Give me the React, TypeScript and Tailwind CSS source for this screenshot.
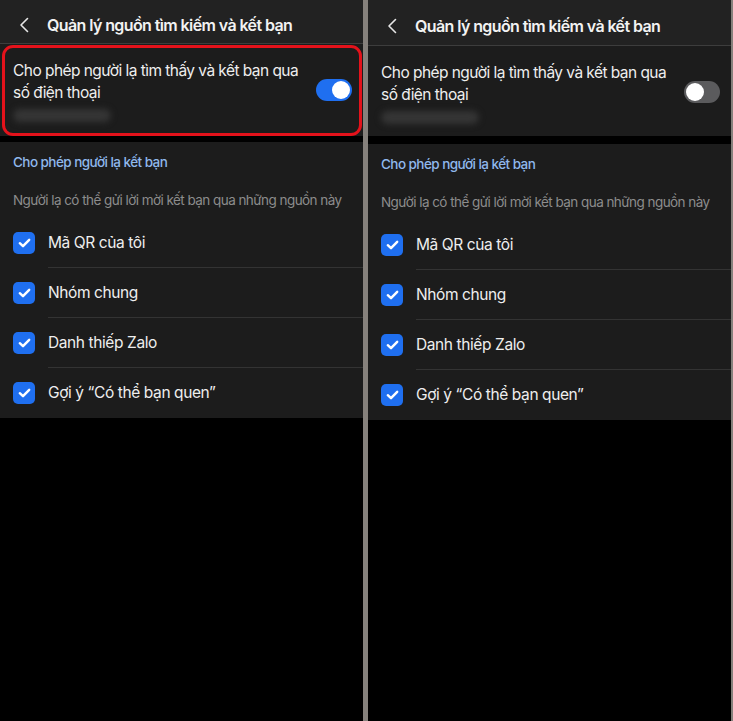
import React from "react";

const items = ["Mã QR của tôi", "Nhóm chung", "Danh thiếp Zalo", "Gợi ý “Có thể bạn quen”"];

function Chevron() {
  return (
    <svg width="10" height="16" viewBox="0 0 10 16" fill="none">
      <path d="M8.5 1.5 L2 8 L8.5 14.5" stroke="#e6e6e6" strokeWidth="1.6" strokeLinecap="round" strokeLinejoin="round" />
    </svg>
  );
}

function Check() {
  return (
    <div className="w-[22px] h-[22px] rounded-[5px] bg-[#1f6ff0] flex items-center justify-center shrink-0">
      <svg width="13" height="10" viewBox="0 0 13 10" fill="none">
        <path d="M1.8 5.2 L5 8.2 L11.2 1.8" stroke="white" strokeWidth="2.4" strokeLinecap="round" strokeLinejoin="round" />
      </svg>
    </div>
  );
}

function Toggle({ on }: { on: boolean }) {
  return on ? (
    <div className="w-[36px] h-[22px] rounded-full bg-[#1f6ff0] flex items-center justify-end pr-[2px]">
      <div className="w-[18px] h-[18px] rounded-full bg-white" />
    </div>
  ) : (
    <div className="w-[36px] h-[22px] rounded-full bg-[#5b5b5d] flex items-center justify-start pl-[2px]">
      <div className="w-[18px] h-[18px] rounded-full bg-white" />
    </div>
  );
}

function Panel({ on, shift }: { on: boolean; shift: boolean }) {
  return (
    <div className="w-[363px] h-full bg-black flex flex-col font-[Inter,'Noto_Sans',sans-serif]">
      <div className={`${shift ? "h-[46px] pt-[6px]" : "h-[44px] pt-[6px]"} bg-[#222222] border-b border-[#3d3d3d] flex items-center shrink-0`}>
        <div className="w-[47px] pl-[19px] flex items-center">
          <Chevron />
        </div>
        <span className="text-[16px] font-semibold text-[#f2f2f2] tracking-[-0.6px]">Quản lý nguồn tìm kiếm và kết bạn</span>
      </div>
      <div className={`relative bg-[#1c1c1c] ${shift ? "h-[90px]" : "h-[92px]"} flex items-start pl-[13px] pr-[11px] pt-[16px] shrink-0`}>
        <div className="flex-1">
          <div className="text-[15.5px] leading-[22px] text-[#eeeeee] tracking-[-0.55px]">
            Cho phép người lạ tìm thấy và kết bạn qua
            <br />
            số điện thoại
          </div>
          <div className="mt-[5px] w-[98px] h-[13px] rounded-full bg-[#353535] blur-[3px]" />
        </div>
        <div className="mt-[19px]">
          <Toggle on={on} />
        </div>
        {on && (
          <div className="absolute left-[2px] right-[1px] top-[1px] bottom-0 border-[3px] border-[#e4121b] rounded-[11px] pointer-events-none" />
        )}
      </div>
      <div className={`${shift ? "h-[8px]" : "h-[6px]"} bg-black shrink-0`} />
      <div className="bg-[#1c1c1c] shrink-0">
        <div className="h-[40px] flex items-center pl-[13px] text-[13.5px] font-medium text-[#8fb8ec] tracking-[-0.55px]">
          Cho phép người lạ kết bạn
        </div>
        <div className="h-[36px] flex items-center pl-[13px] text-[13.5px] text-[#8c8c8c] tracking-[-0.55px] whitespace-nowrap">
          Người lạ có thể gửi lời mời kết bạn qua những nguồn này
        </div>
        {items.map((t, i) => (
          <div key={t} className="h-[50px] flex items-center pl-[13px]">
            <Check />
            <div
              className={`ml-[13px] flex-1 h-full flex items-center text-[15.5px] text-[#eeeeee] tracking-[-0.4px] ${
                i < items.length - 1 ? "border-b border-[#333333]" : ""
              }`}
            >
              {t}
            </div>
          </div>
        ))}
      </div>
    </div>
  );
}

export default function App() {
  return (
    <div className="w-[733px] h-[721px] bg-black flex">
      <Panel on={true} shift={false} />
      <div className="w-[5px] h-full bg-[#86817c]" />
      <Panel on={false} shift={true} />
      <div className="w-[2px] h-full bg-[#86817c]" />
    </div>
  );
}
